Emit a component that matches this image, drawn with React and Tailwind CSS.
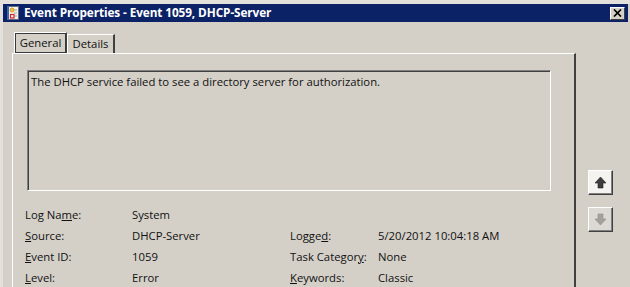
import React from 'react';

const font = { fontFamily: '"Open Sans", "Liberation Sans", sans-serif' };

const fields = [
  { label: <>Log Na<u>m</u>e:</>, value: 'System' },
  { label: <><u>S</u>ource:</>, value: 'DHCP-Server', label2: <>Logge<u>d</u>:</>, value2: '5/20/2012 10:04:18 AM' },
  { label: <><u>E</u>vent ID:</>, value: '1059', label2: <>Task Categor<u>y</u>:</>, value2: 'None' },
  { label: <><u>L</u>evel:</>, value: 'Error', label2: <><u>K</u>eywords:</>, value2: 'Classic' },
];

const TitleIcon = () => (
  <svg width="14" height="16" viewBox="0 0 14 16">
    <rect x="1.5" y="1.5" width="11" height="13" fill="#f6f2de" stroke="#5b6a8a" />
    <rect x="1" y="2" width="2" height="12" fill="#3a62b8" />
    <line x1="8" y1="5" x2="11" y2="5" stroke="#9aa7c0" />
    <line x1="8" y1="8" x2="11" y2="8" stroke="#9aa7c0" />
    <line x1="8" y1="11" x2="11" y2="11" stroke="#9aa7c0" />
    <circle cx="6" cy="5" r="2" fill="#f2c53d" stroke="#b38a12" strokeWidth="0.7" />
    <rect x="4.5" y="9.5" width="3.5" height="3.5" fill="#f4f4f4" stroke="#d8242a" strokeWidth="1.2" />
  </svg>
);

const ArrowButton = ({ down, disabled }) => (
  <div className="w-[25px] h-[25px] border border-t-white border-l-white border-r-[#404040] border-b-[#404040] bg-[#d4d0c8]">
    <div className={`w-full h-full border-r border-b border-[#808080] flex items-center justify-center ${disabled ? 'bg-[#dcd9d4]' : 'bg-[#f4f3f0]'}`}>
      <svg width="13" height="13" viewBox="0 0 13 13" className={down ? 'rotate-180' : ''}>
        <path d="M6.5 1 L12 7 H9 V12 H4 V7 H1 Z" fill={disabled ? '#a3a19c' : '#3c3c3c'} stroke={disabled ? '#8f8d89' : '#202020'} strokeWidth="0.6" />
      </svg>
    </div>
  </div>
);

export default function App() {
  return (
    <div className="w-[630px] h-[287px] overflow-hidden bg-[#d4d0c8] text-[#111] text-[11.3px] border-l-[3px] border-t-[4px] border-[#e4e1dc]" style={font}>
      {/* Title bar */}
      <div className="h-[18px] mr-[2px] bg-[#0c2266] flex items-center pl-[3px] pr-[3px]">
        <TitleIcon />
        <span className="ml-[4px] text-white font-bold text-[11.8px] leading-none tracking-[-0.1px]">Event Properties - Event 1059, DHCP-Server</span>
        <div className="ml-auto w-[15px] h-[13px] border border-t-white border-l-white border-r-[#404040] border-b-[#404040] bg-[#d4d0c8] flex items-center justify-center">
          <svg width="9" height="8" viewBox="0 0 9 8">
            <path d="M1 0.5 L8 7.5 M8 0.5 L1 7.5" stroke="#000" strokeWidth="1.7" />
          </svg>
        </div>
      </div>

      <div className="flex">
        {/* Tabs + panel */}
        <div className="ml-[9px] mt-[10px] w-[564px] flex flex-col">
          <div className="flex items-end h-[21px] pl-[2px]">
            <div className="h-[21px] w-[53px] border-l border-t border-white border-r border-r-[#404040] bg-[#d4d0c8]">
              <div className="h-full border border-[#3a3a3a] flex items-center justify-center leading-none">General</div>
            </div>
            <div className="h-[19px] w-[48px] border-l border-t border-white border-r-2 border-r-[#404040] flex items-center justify-center leading-none">Details</div>
          </div>
          <div className="h-[240px] border-l border-t border-white border-r-2 border-r-[#404040] pl-[14px] pt-[16px]">
            <div className="w-[524px] h-[121px] border-l border-t border-[#808080] border-r border-b border-r-white border-b-white">
              <div className="h-full border-l border-t border-[#404040] px-[2px] pt-[2px] leading-[16px]">
                The DHCP service failed to see a directory server for authorization.
              </div>
            </div>
            <div className="mt-[13px] flex flex-col">
              {fields.map((f, i) => (
                <div key={i} className="h-[21px] flex items-center leading-none">
                  <div className="w-[107px] -ml-[2px]">{f.label}</div>
                  <div className="w-[158px]">{f.value}</div>
                  {f.label2 && <div className="w-[88px]">{f.label2}</div>}
                  {f.value2 && <div>{f.value2}</div>}
                </div>
              ))}
            </div>
          </div>
        </div>

        {/* Side buttons */}
        <div className="ml-[12px] mt-[148px] flex flex-col gap-[12px]">
          <ArrowButton />
          <ArrowButton down disabled />
        </div>
      </div>
    </div>
  );
}
